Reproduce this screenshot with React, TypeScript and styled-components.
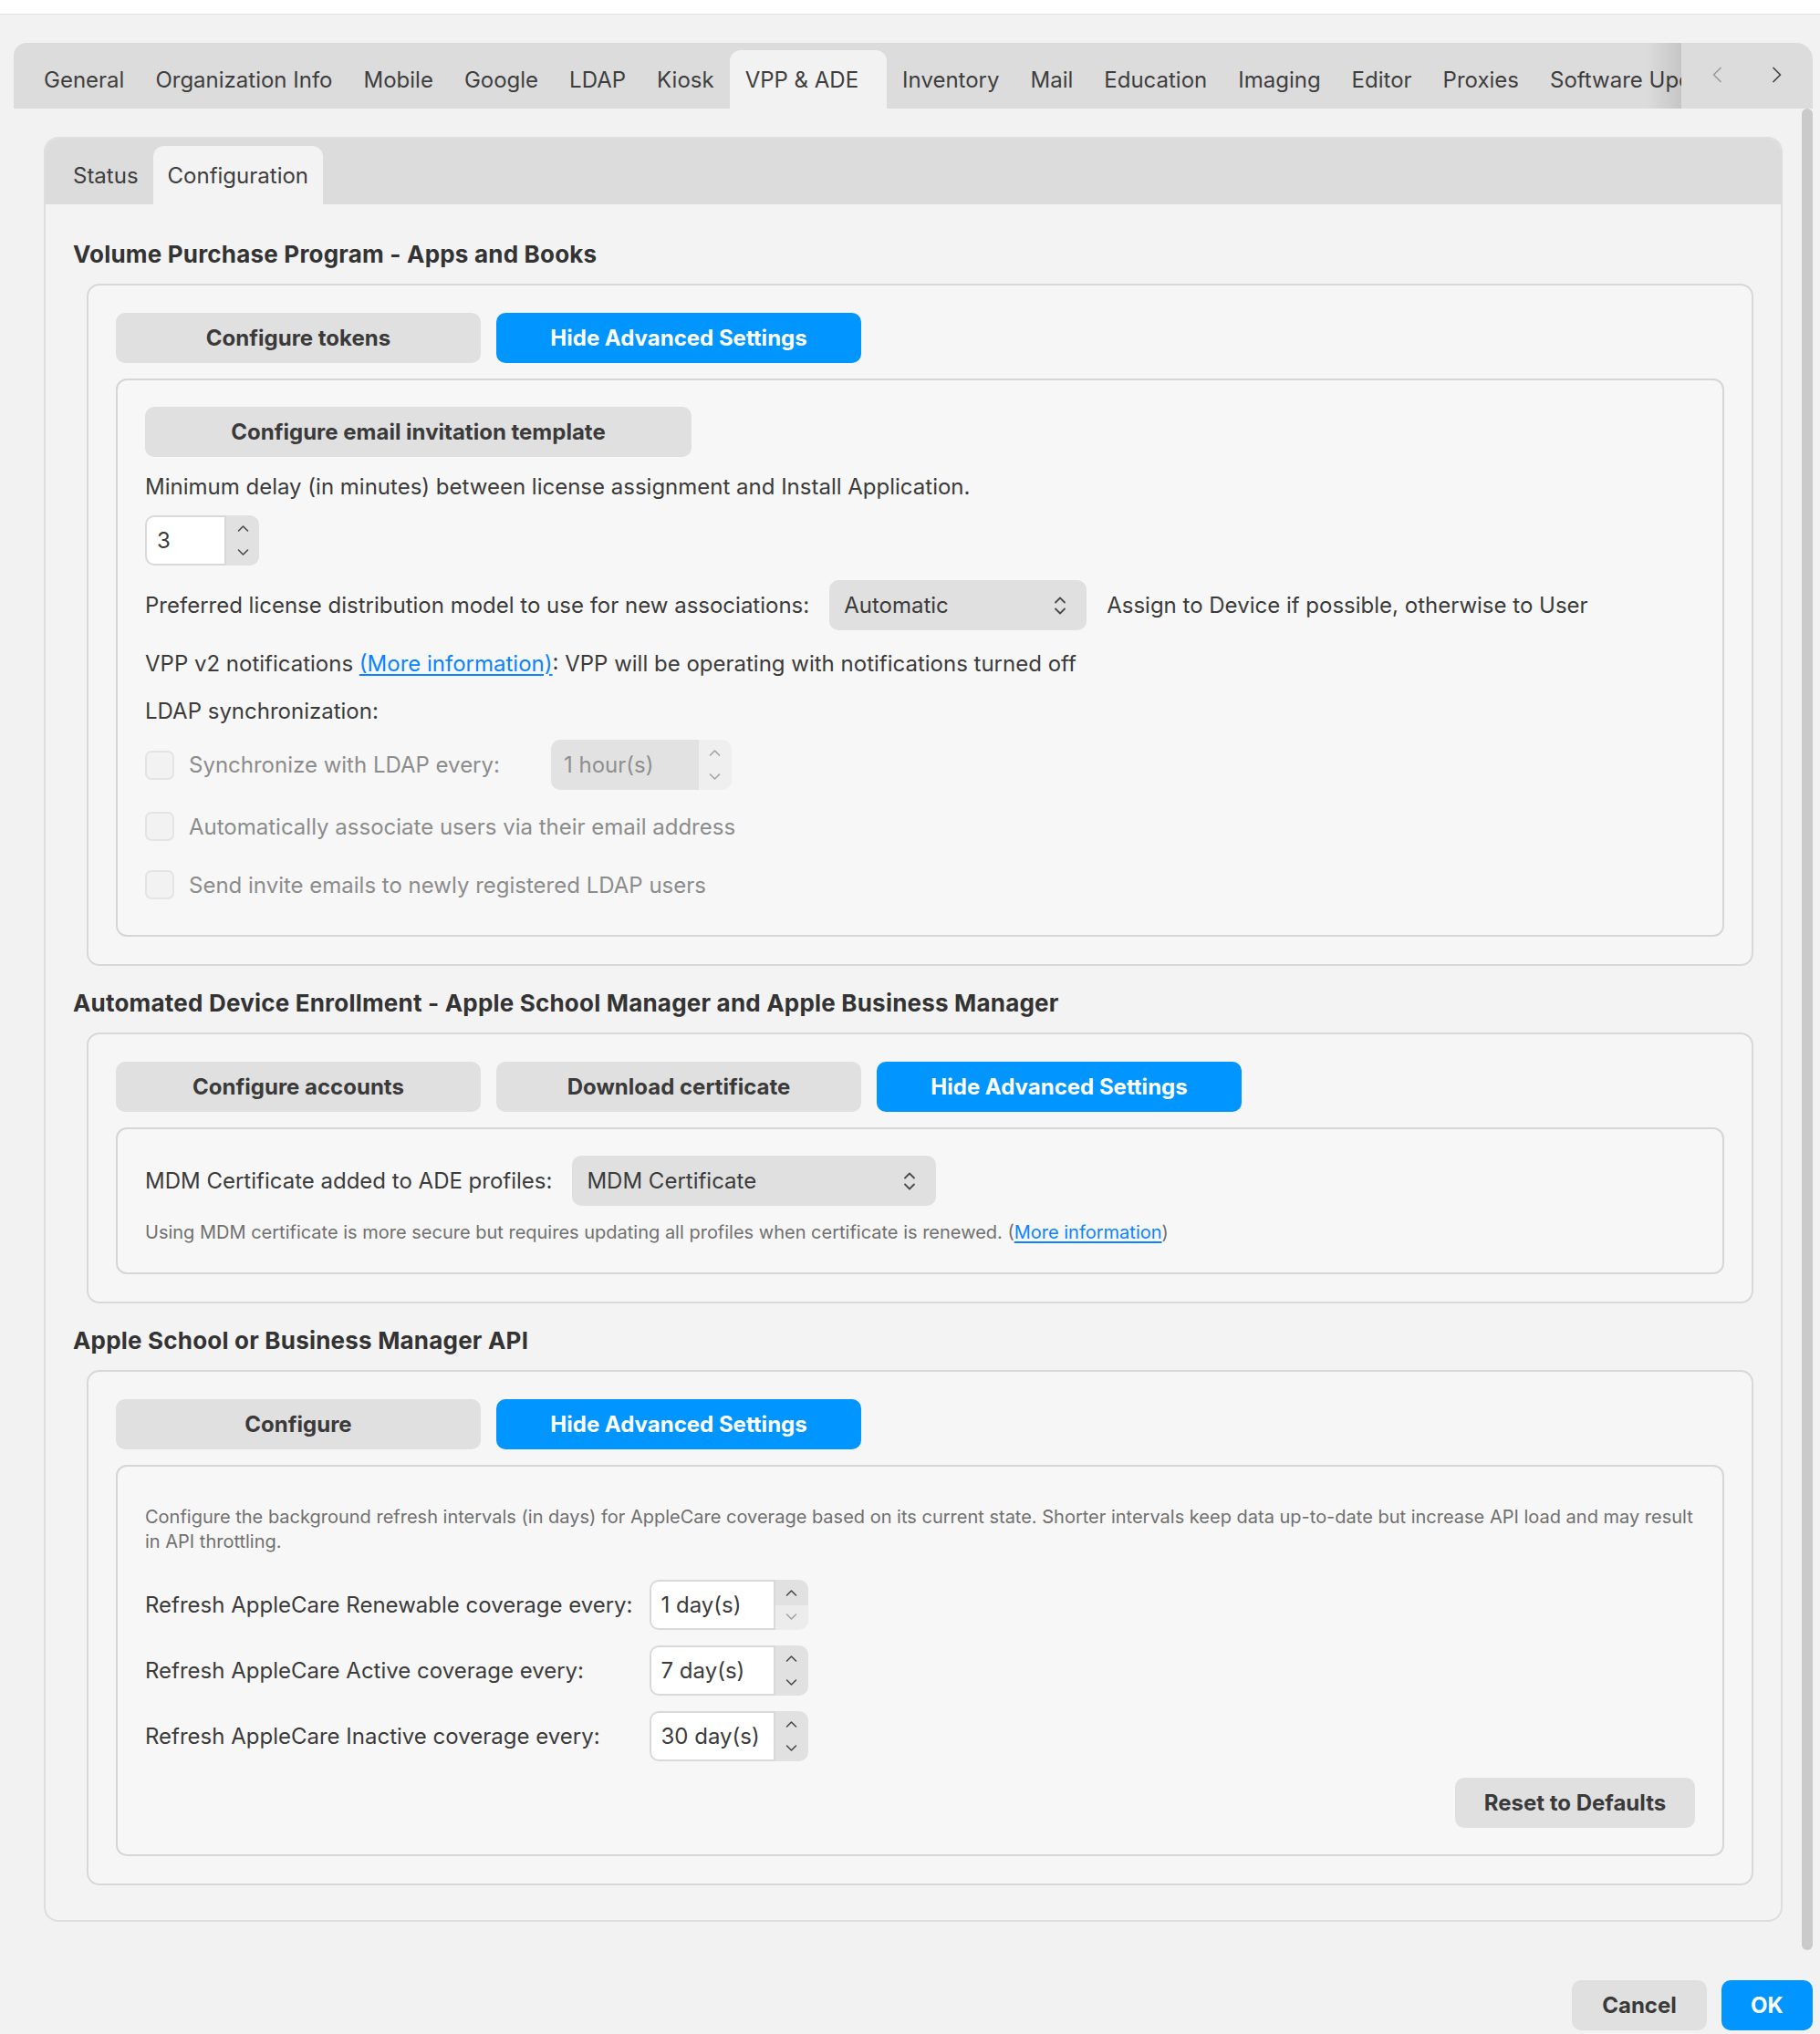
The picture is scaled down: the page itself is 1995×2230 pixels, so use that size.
import styled, { createGlobalStyle } from "styled-components";

const GlobalStyle = createGlobalStyle`
  html, body {
    margin: 0;
    padding: 0;
  }
  body {
    background: #f2f2f2;
    font-family: Inter, "Noto Sans", "Liberation Sans", sans-serif;
    color: #3b3b3b;
  }
  * {
    box-sizing: border-box;
  }
`;

const mainTabs = [
  "General",
  "Organization Info",
  "Mobile",
  "Google",
  "LDAP",
  "Kiosk",
  "VPP & ADE",
  "Inventory",
  "Mail",
  "Education",
  "Imaging",
  "Editor",
  "Proxies",
  "Software Update",
];

const coverageRows = [
  { label: "Refresh AppleCare Renewable coverage every:", value: "1 day(s)", atMin: true },
  { label: "Refresh AppleCare Active coverage every:", value: "7 day(s)", atMin: false },
  { label: "Refresh AppleCare Inactive coverage every:", value: "30 day(s)", atMin: false },
];

/* ---------- window chrome ---------- */

const Window = styled.div`
  width: 1995px;
  height: 2230px;
  display: flex;
  flex-direction: column;
  overflow: hidden;
`;

const TitleStrip = styled.div`
  height: 16px;
  flex: none;
  background: #ffffff;
  border-bottom: 1px solid #e3e3e3;
`;

const Main = styled.div`
  flex: 1;
  display: flex;
  flex-direction: column;
  padding: 31px 8px 0 15px;
`;

const TabBar = styled.div`
  height: 72px;
  flex: none;
  display: flex;
  background: #dcdcdc;
  border-radius: 14px 18px 0 0;
`;

// tabs that don't fit are clipped under a darkening edge
const TabStrip = styled.div`
  flex: 1;
  display: flex;
  align-items: flex-end;
  overflow: hidden;
  position: relative;
  padding-left: 16px;

  &::after {
    content: "";
    position: absolute;
    top: 0;
    right: 0;
    bottom: 0;
    width: 38px;
    background: linear-gradient(to right, rgba(0, 0, 0, 0), rgba(0, 0, 0, 0.1));
  }
`;

const Tab = styled.div<{ $active?: boolean }>`
  flex: none;
  height: 64px;
  display: flex;
  align-items: center;
  padding: ${(p) => (p.$active ? "1px 31px 0 17px" : "1px 17px 0")};
  font-size: 24px;
  color: #3e3e3e;
  white-space: nowrap;
  border-radius: 12px 12px 0 0;
  background: ${(p) => (p.$active ? "#f2f2f2" : "transparent")};
`;

const TabArrows = styled.div`
  flex: none;
  display: flex;
  padding: 0 6px;
`;

const ArrowButton = styled.div<{ $dim?: boolean }>`
  width: 66px;
  display: flex;
  align-items: center;
  justify-content: center;
  padding-bottom: 2px;
  color: ${(p) => (p.$dim ? "#9c9c9c" : "#434343")};
`;

const ScrollArea = styled.div`
  height: 2021px;
  flex: none;
  display: flex;
`;

const ScrollContent = styled.div`
  flex: 1;
  padding: 31px 21px 0 33px;
  overflow: hidden;
`;

const ScrollThumb = styled.div`
  width: 12px;
  height: 2019px;
  border-radius: 6px;
  background: #cacaca;
`;

const Footer = styled.div`
  flex: 1;
  display: flex;
  justify-content: flex-end;
  align-items: flex-start;
  gap: 16px;
  padding-top: 31px;
`;

/* ---------- panel ---------- */

const Panel = styled.div`
  border: 2px solid #dedede;
  border-radius: 16px;
  background: #f3f3f3;
  overflow: hidden;
`;

const SubTabBar = styled.div`
  height: 72px;
  display: flex;
  align-items: flex-end;
  padding-left: 14px;
  background: #dcdcdc;
`;

const SubTab = styled(Tab)`
  padding: 1px 16px 0;
  background: ${(p) => (p.$active ? "#f3f3f3" : "transparent")};
`;

const PanelBody = styled.div`
  padding: 39px 30px 38px 30px;
`;

const SectionTitle = styled.h2`
  margin: 0;
  font-size: 26px;
  line-height: 32px;
  font-weight: 700;
  letter-spacing: 0.2px;
  color: #333333;
`;

const SectionBox = styled.section`
  margin: 16px 0 25px 15px;
  border: 2px solid #d8d8d8;
  border-radius: 14px;
  background: #f6f6f6;
  padding: 30px;
  display: flex;
  flex-direction: column;
  gap: 17px;

  &:last-child {
    margin-bottom: 0;
  }
`;

const ButtonRow = styled.div`
  display: flex;
  gap: 17px;
`;

const Button = styled.button<{ $primary?: boolean; $width: number }>`
  width: ${(p) => p.$width}px;
  height: 55px;
  flex: none;
  border: none;
  border-radius: 10px;
  background: ${(p) => (p.$primary ? "#0095ff" : "#e0e0e0")};
  color: ${(p) => (p.$primary ? "#ffffff" : "#3a3a3a")};
  font-family: inherit;
  font-size: 24px;
  font-weight: 700;
  padding: 0;
`;

const InnerBox = styled.div<{ $bottom?: number }>`
  border: 2px solid #d6d6d6;
  border-radius: 12px;
  background: #f7f7f7;
  padding: 29px 30px ${(p) => p.$bottom ?? 29}px;
  display: flex;
  flex-direction: column;
  align-items: flex-start;
  gap: 16px;
`;

const TextLine = styled.div<{ $height?: number }>`
  height: ${(p) => p.$height ?? 32}px;
  display: flex;
  align-items: center;
  font-size: 24px;
  white-space: nowrap;
  color: #3b3b3b;
`;

const Link = styled.a`
  color: #0a84ff;
  text-decoration: underline;
  text-underline-offset: 3px;
  text-decoration-thickness: 2px;
  cursor: pointer;
`;

const FieldRow = styled.div`
  display: flex;
  align-items: center;
  gap: 22px;
  font-size: 24px;
  white-space: nowrap;
`;

const Note = styled.div`
  font-size: 20px;
  line-height: 26px;
  color: #707070;

  ${Link} {
    text-decoration-thickness: 1.5px;
  }
`;

const Description = styled(Note)`
  line-height: 27px;
  margin: 13px 0 12px;
`;

/* ---------- select ---------- */

const Select = styled.div<{ $width: number }>`
  width: ${(p) => p.$width}px;
  height: 55px;
  flex: none;
  display: flex;
  align-items: center;
  justify-content: space-between;
  padding: 0 22px 0 16px;
  border-radius: 10px;
  background: #e0e0e0;
  color: #3b3b3b;
  font-size: 24px;
`;

const UpDown = () => (
  <svg width="14" height="22" viewBox="0 0 14 22" fill="none">
    <path d="M2 7.5 L7 2.5 L12 7.5" stroke="#4a4a4a" strokeWidth="1.8" strokeLinecap="round" strokeLinejoin="round" />
    <path d="M2 14.5 L7 19.5 L12 14.5" stroke="#4a4a4a" strokeWidth="1.8" strokeLinecap="round" strokeLinejoin="round" />
  </svg>
);

/* ---------- number stepper ---------- */

const Stepper = styled.div<{ $width: number }>`
  width: ${(p) => p.$width}px;
  height: 55px;
  flex: none;
  display: flex;
`;

const StepperValue = styled.div<{ $disabled?: boolean }>`
  flex: 1;
  display: flex;
  align-items: center;
  padding-left: ${(p) => (p.$disabled ? 12 : 11)}px;
  font-size: 24px;
  color: ${(p) => (p.$disabled ? "#8f8f8f" : "#3b3b3b")};
  background: ${(p) => (p.$disabled ? "#e2e2e2" : "#ffffff")};
  border: 2px solid ${(p) => (p.$disabled ? "#e2e2e2" : "#d9d9d9")};
  border-radius: 10px 0 0 10px;
`;

const StepperArrows = styled.div`
  width: 36px;
  display: flex;
  flex-direction: column;
  border-radius: 0 10px 10px 0;
  overflow: hidden;
`;

const StepperHalf = styled.div<{ $tone: "normal" | "dim" | "off"; $down?: boolean }>`
  flex: 1;
  display: flex;
  justify-content: center;
  align-items: center;
  padding: ${(p) => (p.$down ? "0 0 2px" : "2px 0 0")};
  background: ${(p) => (p.$tone === "normal" ? "#e1e1e1" : p.$tone === "dim" ? "#ececec" : "#efefef")};
  color: ${(p) => (p.$tone === "normal" ? "#4a4a4a" : "#a3a3a3")};
`;

const Chevron = ({ down }: { down?: boolean }) => (
  <svg width="13" height="9" viewBox="0 0 13 9" fill="none">
    <path
      d={down ? "M1.5 2 L6.5 7 L11.5 2" : "M1.5 7 L6.5 2 L11.5 7"}
      stroke="currentColor"
      strokeWidth="1.6"
      strokeLinecap="round"
      strokeLinejoin="round"
    />
  </svg>
);

function NumberField({
  value,
  width,
  disabled,
  atMin,
}: {
  value: string;
  width: number;
  disabled?: boolean;
  atMin?: boolean;
}) {
  return (
    <Stepper $width={width}>
      <StepperValue $disabled={disabled}>{value}</StepperValue>
      <StepperArrows>
        <StepperHalf $tone={disabled ? "off" : "normal"}>
          <Chevron />
        </StepperHalf>
        <StepperHalf $tone={disabled ? "off" : atMin ? "dim" : "normal"} $down>
          <Chevron down />
        </StepperHalf>
      </StepperArrows>
    </Stepper>
  );
}

/* ---------- checkbox rows ---------- */

const CheckRow = styled.label<{ $height: number }>`
  height: ${(p) => p.$height}px;
  display: flex;
  align-items: center;
  gap: 16px;
  font-size: 24px;
  color: #8c8c8c;
  white-space: nowrap;
`;

const CheckBox = styled.span`
  width: 32px;
  height: 32px;
  flex: none;
  border: 2px solid #e4e4e4;
  border-radius: 7px;
  background: #f2f2f2;
`;

const SyncInterval = styled.div`
  margin-left: 40px;
`;

/* ---------- coverage grid ---------- */

const CoverageGrid = styled.div`
  display: grid;
  grid-template-columns: max-content max-content;
  column-gap: 18px;
  row-gap: 17px;
  align-items: center;
  font-size: 24px;
`;

const ResetRow = styled.div`
  align-self: stretch;
  display: flex;
  justify-content: flex-end;
  margin-top: 2px;
`;

export default function App() {
  return (
    <>
      <GlobalStyle />
      <Window>
        <TitleStrip />
        <Main>
          <TabBar>
            <TabStrip>
              {mainTabs.map((t) => (
                <Tab key={t} $active={t === "VPP & ADE"}>
                  {t}
                </Tab>
              ))}
            </TabStrip>
            <TabArrows>
              <ArrowButton $dim>
                <svg width="12" height="18" viewBox="0 0 12 18" fill="none">
                  <path d="M10 1.5 L2.5 9 L10 16.5" stroke="currentColor" strokeWidth="1.7" strokeLinecap="round" strokeLinejoin="round" />
                </svg>
              </ArrowButton>
              <ArrowButton>
                <svg width="12" height="18" viewBox="0 0 12 18" fill="none">
                  <path d="M2 1.5 L9.5 9 L2 16.5" stroke="currentColor" strokeWidth="1.7" strokeLinecap="round" strokeLinejoin="round" />
                </svg>
              </ArrowButton>
            </TabArrows>
          </TabBar>

          <ScrollArea>
            <ScrollContent>
              <Panel>
                <SubTabBar>
                  <SubTab>Status</SubTab>
                  <SubTab $active>Configuration</SubTab>
                </SubTabBar>
                <PanelBody>
                  <SectionTitle>Volume Purchase Program - Apps and Books</SectionTitle>
                  <SectionBox>
                    <ButtonRow>
                      <Button $width={400}>Configure tokens</Button>
                      <Button $width={400} $primary>
                        Hide Advanced Settings
                      </Button>
                    </ButtonRow>
                    <InnerBox $bottom={31}>
                      <Button $width={599}>Configure email invitation template</Button>
                      <TextLine>Minimum delay (in minutes) between license assignment and Install Application.</TextLine>
                      <NumberField value="3" width={125} />
                      <FieldRow>
                        <span>Preferred license distribution model to use for new associations:</span>
                        <Select $width={282}>
                          Automatic
                          <UpDown />
                        </Select>
                        <span>Assign to Device if possible, otherwise to User</span>
                      </FieldRow>
                      <TextLine $height={40}>
                        VPP v2 notifications&nbsp;<Link>(More information)</Link>: VPP will be operating with
                        notifications turned off
                      </TextLine>
                      <TextLine $height={32}>LDAP synchronization:</TextLine>
                      <CheckRow $height={55}>
                        <CheckBox />
                        Synchronize with LDAP every:
                        <SyncInterval>
                          <NumberField value="1 hour(s)" width={198} disabled />
                        </SyncInterval>
                      </CheckRow>
                      <CheckRow $height={48}>
                        <CheckBox />
                        Automatically associate users via their email address
                      </CheckRow>
                      <CheckRow $height={48}>
                        <CheckBox />
                        Send invite emails to newly registered LDAP users
                      </CheckRow>
                    </InnerBox>
                  </SectionBox>

                  <SectionTitle>Automated Device Enrollment - Apple School Manager and Apple Business Manager</SectionTitle>
                  <SectionBox>
                    <ButtonRow>
                      <Button $width={400}>Configure accounts</Button>
                      <Button $width={400}>Download certificate</Button>
                      <Button $width={400} $primary>
                        Hide Advanced Settings
                      </Button>
                    </ButtonRow>
                    <InnerBox $bottom={31}>
                      <FieldRow>
                        <span>MDM Certificate added to ADE profiles:</span>
                        <Select $width={399}>
                          MDM Certificate
                          <UpDown />
                        </Select>
                      </FieldRow>
                      <Note>
                        Using MDM certificate is more secure but requires updating all profiles when certificate is
                        renewed. (<Link>More information</Link>)
                      </Note>
                    </InnerBox>
                  </SectionBox>

                  <SectionTitle>Apple School or Business Manager API</SectionTitle>
                  <SectionBox>
                    <ButtonRow>
                      <Button $width={400}>Configure</Button>
                      <Button $width={400} $primary>
                        Hide Advanced Settings
                      </Button>
                    </ButtonRow>
                    <InnerBox>
                      <Description>
                        Configure the background refresh intervals (in days) for AppleCare coverage based on its
                        current state. Shorter intervals keep data up-to-date but increase API load and may result in
                        API throttling.
                      </Description>
                      <CoverageGrid>
                        {coverageRows.map((r) => (
                          <>
                            <span key={r.label}>{r.label}</span>
                            <NumberField key={r.value} value={r.value} width={174} atMin={r.atMin} />
                          </>
                        ))}
                      </CoverageGrid>
                      <ResetRow>
                        <Button $width={263}>Reset to Defaults</Button>
                      </ResetRow>
                    </InnerBox>
                  </SectionBox>
                </PanelBody>
              </Panel>
            </ScrollContent>
            <ScrollThumb />
          </ScrollArea>

          <Footer>
            <Button $width={148}>Cancel</Button>
            <Button $width={100} $primary>
              OK
            </Button>
          </Footer>
        </Main>
      </Window>
    </>
  );
}
